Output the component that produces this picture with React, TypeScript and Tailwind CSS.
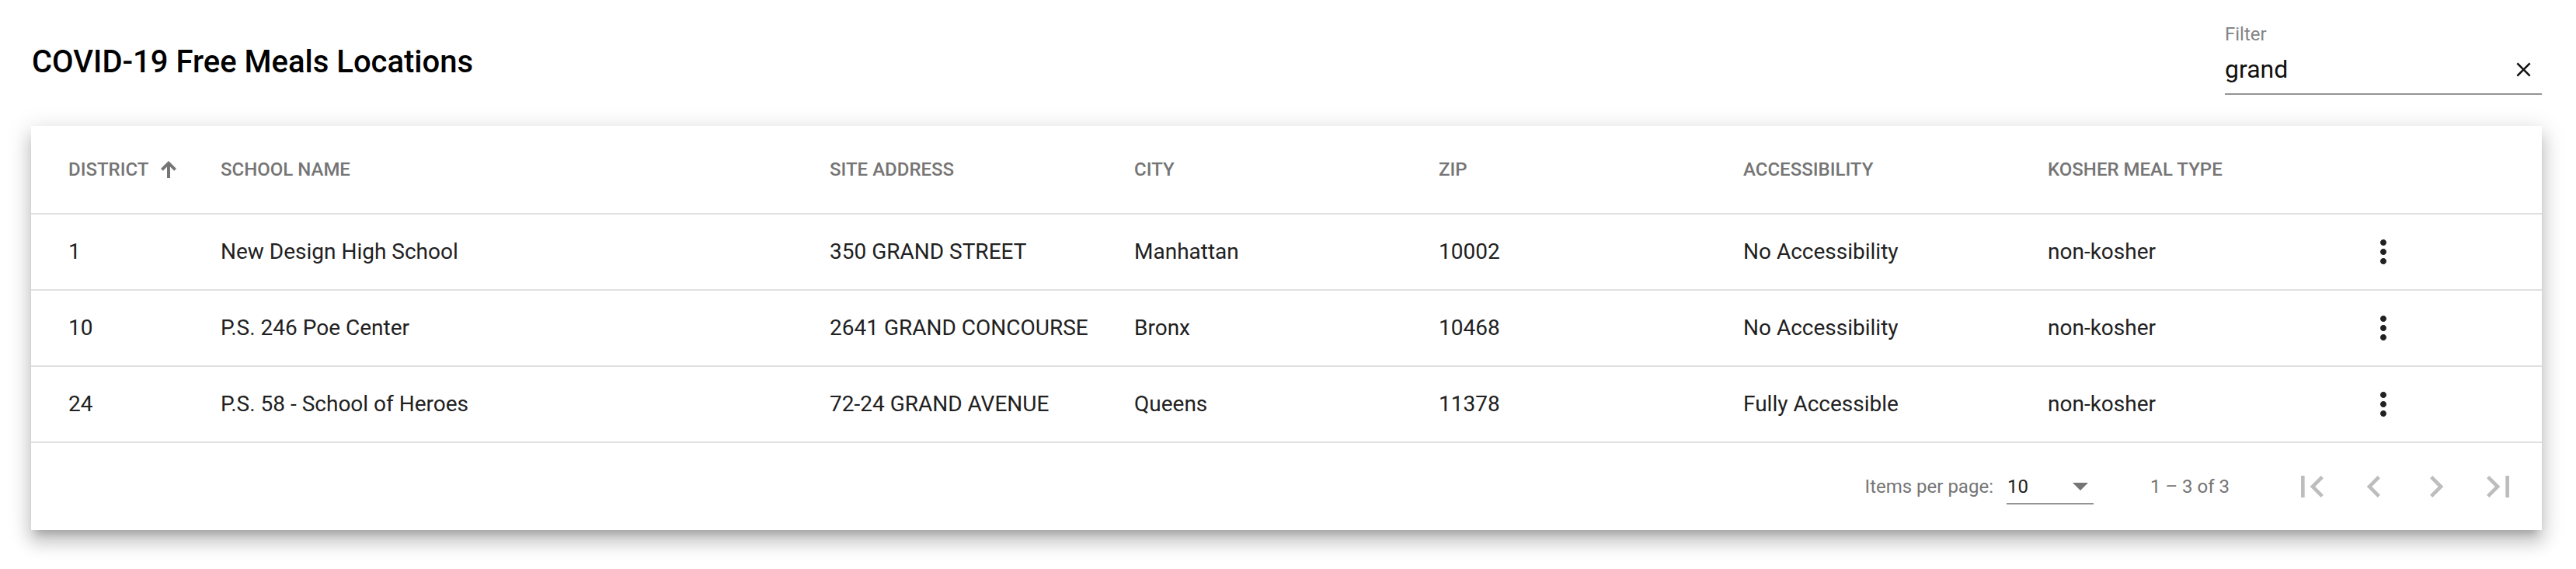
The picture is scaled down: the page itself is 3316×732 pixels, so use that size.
import React from 'react';

interface Site {
  district: string;
  school: string;
  address: string;
  city: string;
  zip: string;
  access: string;
  kosher: string;
}

const sites: Site[] = [
  { district: '1', school: 'New Design High School', address: '350 GRAND STREET', city: 'Manhattan', zip: '10002', access: 'No Accessibility', kosher: 'non-kosher' },
  { district: '10', school: 'P.S. 246 Poe Center', address: '2641 GRAND CONCOURSE', city: 'Bronx', zip: '10468', access: 'No Accessibility', kosher: 'non-kosher' },
  { district: '24', school: 'P.S. 58 - School of Heroes', address: '72-24 GRAND AVENUE', city: 'Queens', zip: '11378', access: 'Fully Accessible', kosher: 'non-kosher' },
];

function NavIcon({ d }: { d: string }) {
  return (
    <button className="w-[80px] h-[80px] flex items-center justify-center text-[#bdbdbd]">
      <svg width="56" height="56" viewBox="0 0 24 24" fill="currentColor">
        <path d={d} />
      </svg>
    </button>
  );
}

export default function App() {
  return (
    <div className="bg-white min-h-[732px] pl-[40px] pr-[44px] font-['Roboto','Liberation_Sans',sans-serif]">
      {/* top bar */}
      <div className="h-[162px] flex justify-between items-start">
        <h2 className="pt-[56px] pl-px text-[40px] leading-[48px] font-medium text-black">
          COVID-19 Free Meals Locations
        </h2>
        <div className="w-[408px] pt-[32px]">
          <div className="text-[24px] leading-[24px] text-[#858585]">Filter</div>
          <div className="mt-[13px] h-[40px] flex items-center justify-between pr-[8px]">
            <span className="text-[32px] leading-[40px] text-[#111]">grand</span>
            <svg width="31" height="31" viewBox="0 0 24 24" fill="#111">
              <path d="M19 6.41L17.59 5 12 10.59 6.41 5 5 6.41 10.59 12 5 17.59 6.41 19 12 13.41 17.59 19 19 17.59 13.41 12z" />
            </svg>
          </div>
          <div className="mt-[11px] h-[2px] bg-[#949494]" />
        </div>
      </div>

      {/* table card */}
      <div className="bg-white shadow-[0_10px_10px_-6px_rgba(0,0,0,0.2),0_16px_20px_2px_rgba(0,0,0,0.14),0_6px_28px_4px_rgba(0,0,0,0.12)]">
        <div className="h-[114px] flex items-center px-[48px] border-b-2 border-[#e0e0e0] text-[24px] font-medium text-[#757575]">
          <div className="w-[196px] flex items-center">
            DISTRICT
            <svg className="ml-[16px]" width="20" height="22" viewBox="0 0 20 22" fill="#757575">
              <rect x="8" y="3" width="4" height="19" />
              <path d="M10 0L20 10l-2.8 2.8L10 5.6 2.8 12.8 0 10z" />
            </svg>
          </div>
          <div className="w-[784px]">SCHOOL NAME</div>
          <div className="w-[392px]">SITE ADDRESS</div>
          <div className="w-[392px]">CITY</div>
          <div className="w-[392px]">ZIP</div>
          <div className="w-[392px]">ACCESSIBILITY</div>
          <div className="w-[392px]">KOSHER MEAL TYPE</div>
          <div className="w-[196px]" />
        </div>

        {sites.map((s) => (
          <div
            key={s.district}
            className="h-[98px] flex items-center px-[48px] border-b-2 border-[#e0e0e0] text-[28px] text-[#212121]"
          >
            <div className="w-[196px]">{s.district}</div>
            <div className="w-[784px]">{s.school}</div>
            <div className="w-[392px]">{s.address}</div>
            <div className="w-[392px]">{s.city}</div>
            <div className="w-[392px]">{s.zip}</div>
            <div className="w-[392px]">{s.access}</div>
            <div className="w-[392px]">{s.kosher}</div>
            <div className="w-[196px]">
              <button className="w-[80px] h-[80px] flex items-center justify-center">
                <svg width="48" height="48" viewBox="0 0 24 24" fill="#212121">
                  <path d="M12 8c1.1 0 2-.9 2-2s-.9-2-2-2-2 .9-2 2 .9 2 2 2zm0 2c-1.1 0-2 .9-2 2s.9 2 2 2 2-.9 2-2-.9-2-2-2zm0 6c-1.1 0-2 .9-2 2s.9 2 2 2 2-.9 2-2-.9-2-2-2z" />
                </svg>
              </button>
            </div>
          </div>
        ))}

        {/* paginator */}
        <div className="h-[112px] flex items-center justify-end pr-[16px] text-[24px] text-[#757575]">
          <span className="leading-[32px]">Items per page:</span>
          <div className="ml-[17px] w-[112px] pt-[7px] flex flex-col">
            <div className="h-[32px] flex items-center justify-between pl-[1px] pr-[7px]">
              <span className="leading-[32px] text-[#212121]">10</span>
              <span className="w-0 h-0 border-x-[10px] border-x-transparent border-t-[10px] border-t-[#757575]" />
            </div>
            <div className="mt-[5px] h-[2px] bg-[#949494]" />
          </div>
          <span className="ml-[73px] mr-[66px] leading-[32px]">1 – 3 of 3</span>
          <div className="flex">
            <NavIcon d="M18.41 16.59L13.82 12l4.59-4.59L17 6l-6 6 6 6zM6 6h2v12H6z" />
            <NavIcon d="M15.41 7.41L14 6l-6 6 6 6 1.41-1.41L10.83 12z" />
            <NavIcon d="M10 6L8.59 7.41 13.17 12l-4.58 4.59L10 18l6-6z" />
            <NavIcon d="M5.59 7.41L10.18 12l-4.59 4.59L7 18l6-6-6-6zM16 6h2v12h-2z" />
          </div>
        </div>
      </div>
    </div>
  );
}
